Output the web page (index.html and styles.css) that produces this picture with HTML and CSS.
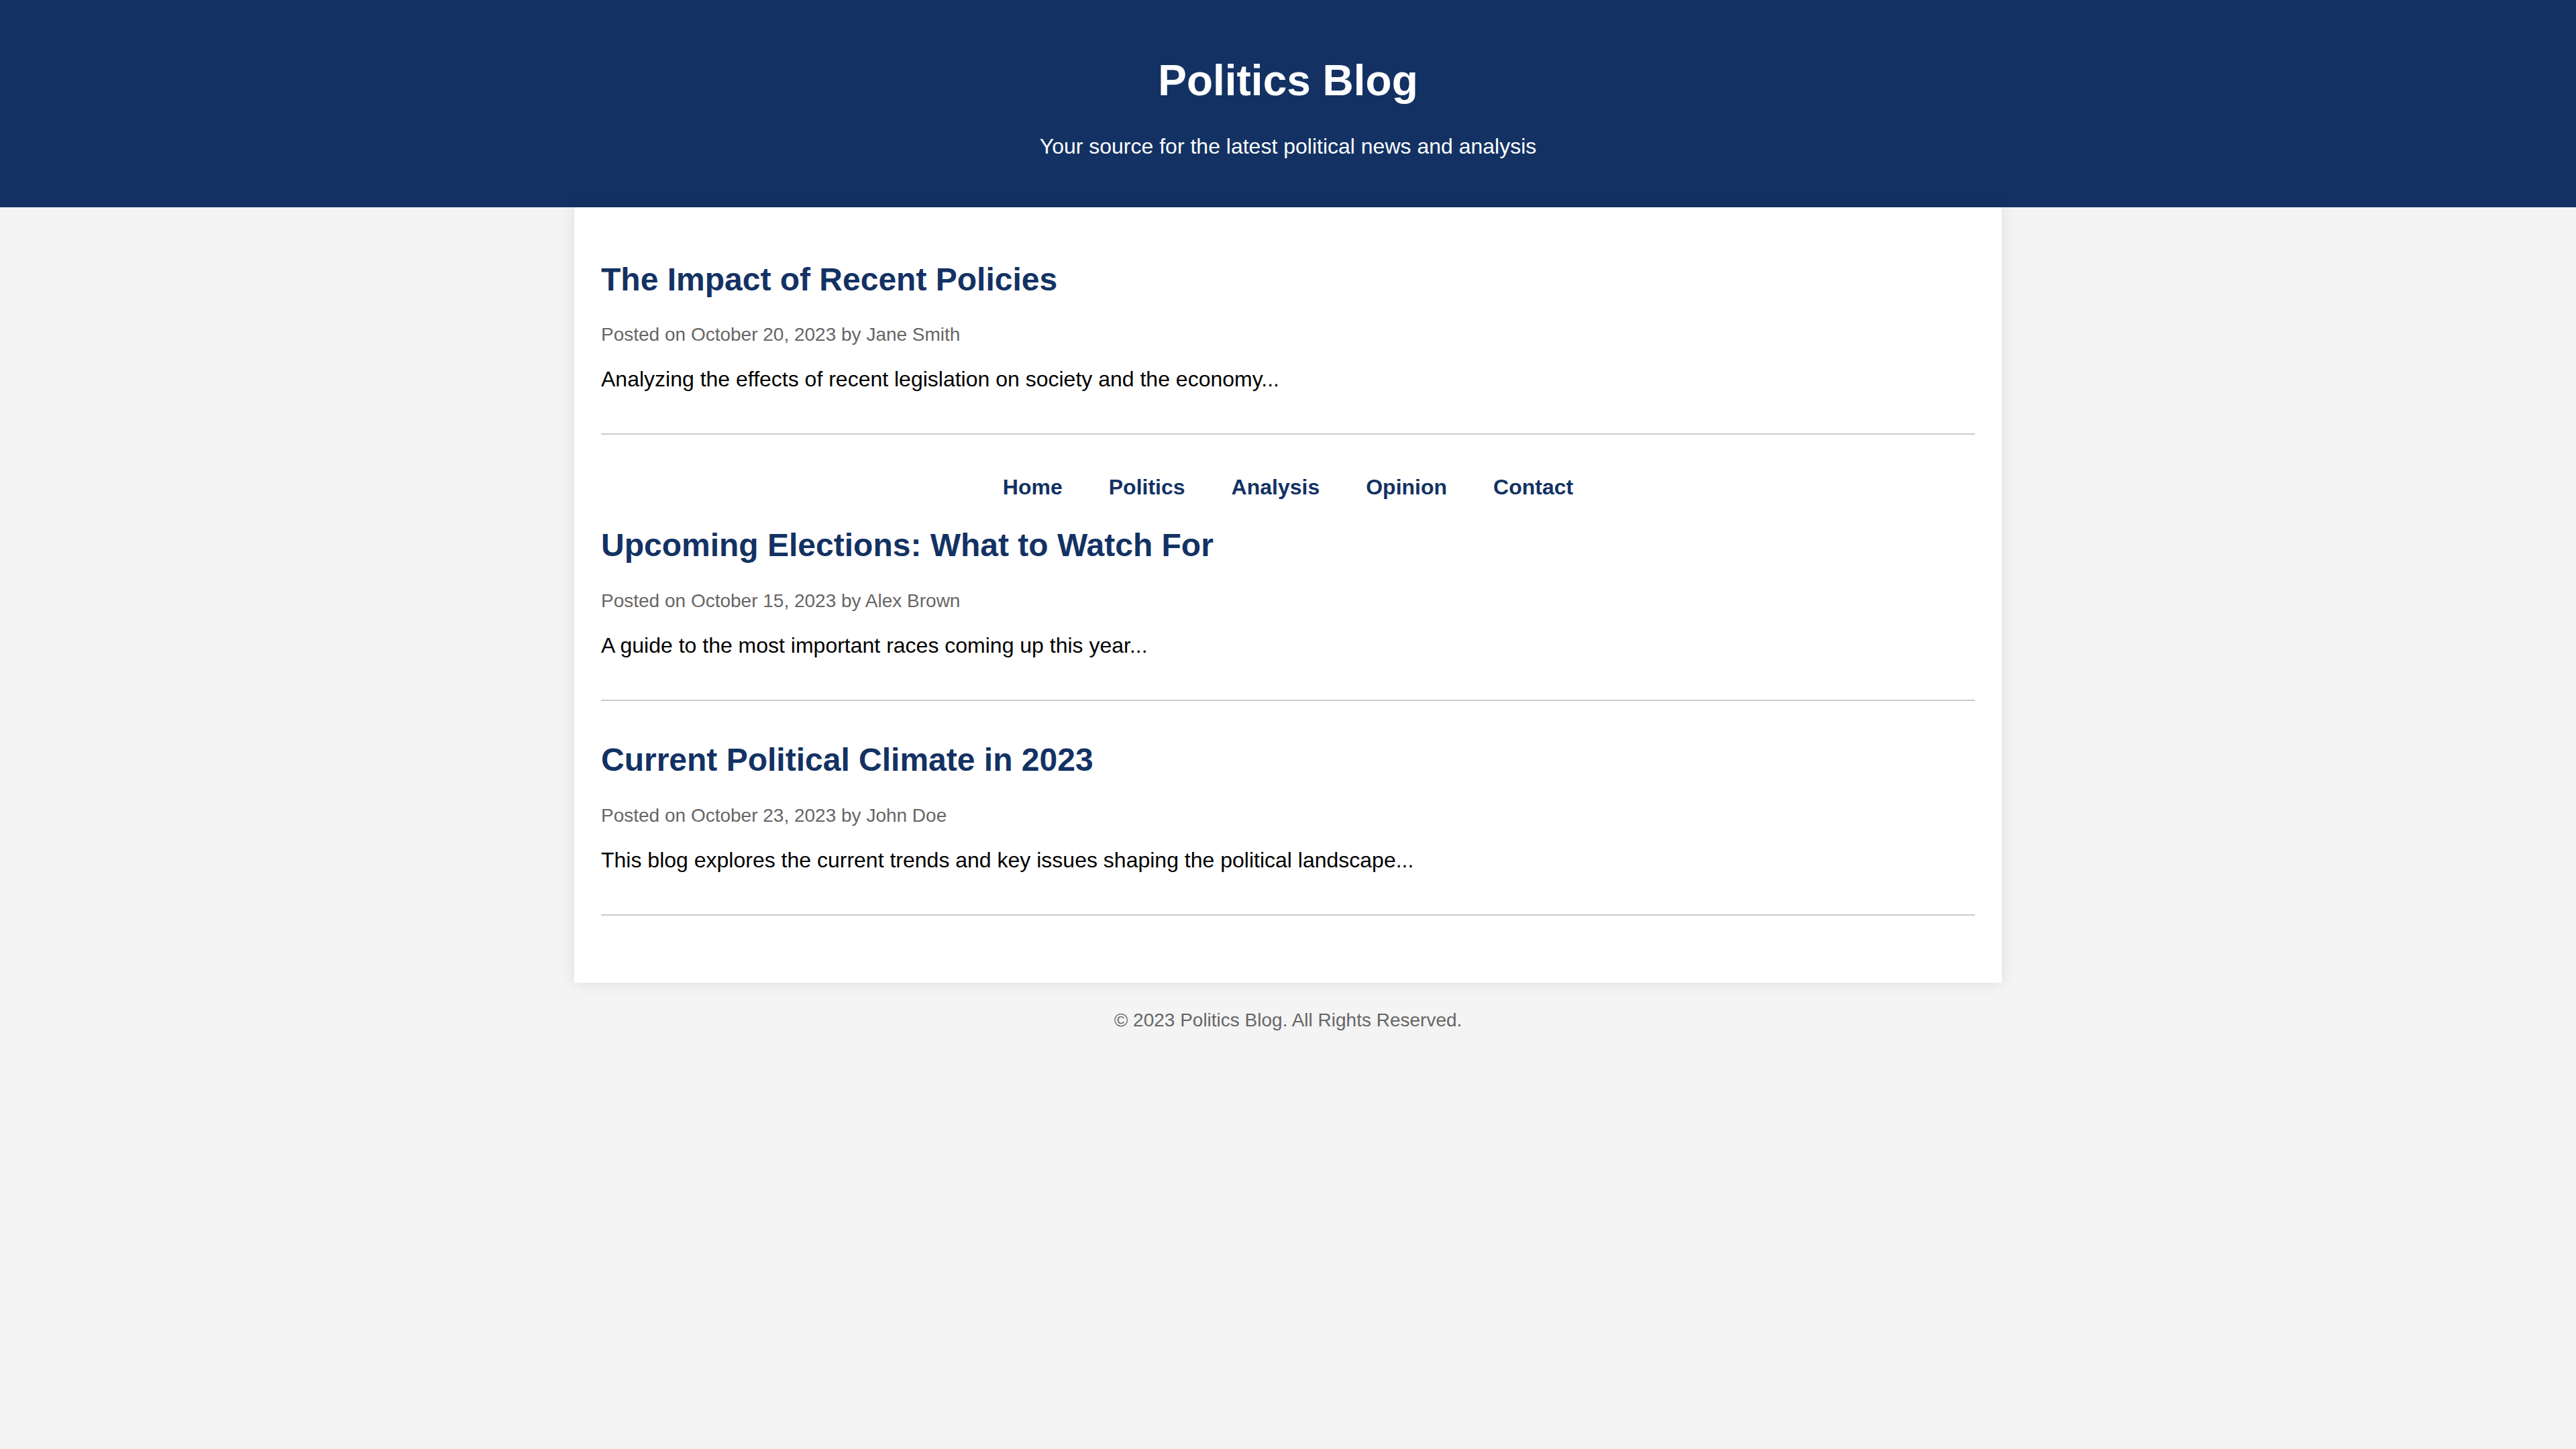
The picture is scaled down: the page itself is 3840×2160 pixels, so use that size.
FILE: index.html
```html
<!DOCTYPE html>
<html lang="en">
<head>
<meta charset="utf-8">
<title>Politics Blog</title>
<link rel="stylesheet" href="styles.css">
</head>
<body>
<header class="site-header">
  <h1 class="site-title">Politics Blog</h1>
  <p class="site-tagline">Your source for the latest political news and analysis</p>
</header>
<main class="container">
  <article class="post">
    <h2 class="post-title">The Impact of Recent Policies</h2>
    <p class="post-meta">Posted on October 20, 2023 by Jane Smith</p>
    <p class="post-excerpt">Analyzing the effects of recent legislation on society and the economy...</p>
  </article>
  <nav class="site-nav">
    <a class="nav-link" href="#">Home</a>
    <a class="nav-link" href="#">Politics</a>
    <a class="nav-link" href="#">Analysis</a>
    <a class="nav-link" href="#">Opinion</a>
    <a class="nav-link" href="#">Contact</a>
  </nav>
  <article class="post">
    <h2 class="post-title">Upcoming Elections: What to Watch For</h2>
    <p class="post-meta">Posted on October 15, 2023 by Alex Brown</p>
    <p class="post-excerpt">A guide to the most important races coming up this year...</p>
  </article>
  <article class="post">
    <h2 class="post-title">Current Political Climate in 2023</h2>
    <p class="post-meta">Posted on October 23, 2023 by John Doe</p>
    <p class="post-excerpt">This blog explores the current trends and key issues shaping the political landscape...</p>
  </article>
</main>
<footer class="site-footer">
  <p class="footer-text">&copy; 2023 Politics Blog. All Rights Reserved.</p>
</footer>
</body>
</html>
```

FILE: styles.css
```css
html, body {
  margin: 0;
  padding: 0;
}

body {
  background: #f4f4f4;
  font-family: "Liberation Sans", Arial, sans-serif;
  font-size: 32px;
  line-height: normal;
  color: #000;
}

.site-header {
  background: #133263;
  color: #fff;
  text-align: center;
  padding: 40px;
}

.site-title {
  font-size: 64px;
  font-weight: bold;
  margin: 42.88px 0;
}

.site-tagline {
  font-size: 32px;
  margin: 32px 0;
}

.container {
  display: block;
  position: relative;
  width: 2048px;
  margin: 0 auto;
  padding: 40px;
  background: #fff;
  box-shadow: 0 0 20px rgba(0, 0, 0, 0.1);
}

.post {
  border-bottom: 2px solid #ccc;
  padding-bottom: 30px;
  margin-bottom: 60px;
}

.post-title {
  font-size: 48px;
  font-weight: bold;
  color: #133263;
  margin: 39.84px 0;
}

.post-meta {
  font-size: 28px;
  color: #666;
  margin: 28px 0;
}

.post-excerpt {
  font-size: 32px;
  margin: 32px 0;
}

.site-nav {
  display: flex;
  justify-content: center;
  gap: 69px;
}

.nav-link {
  color: #133263;
  font-weight: bold;
  font-size: 32px;
  text-decoration: none;
}

.site-footer {
  text-align: center;
  padding: 40px;
}

.footer-text {
  font-size: 28px;
  color: #666;
  margin: 0;
}
```
